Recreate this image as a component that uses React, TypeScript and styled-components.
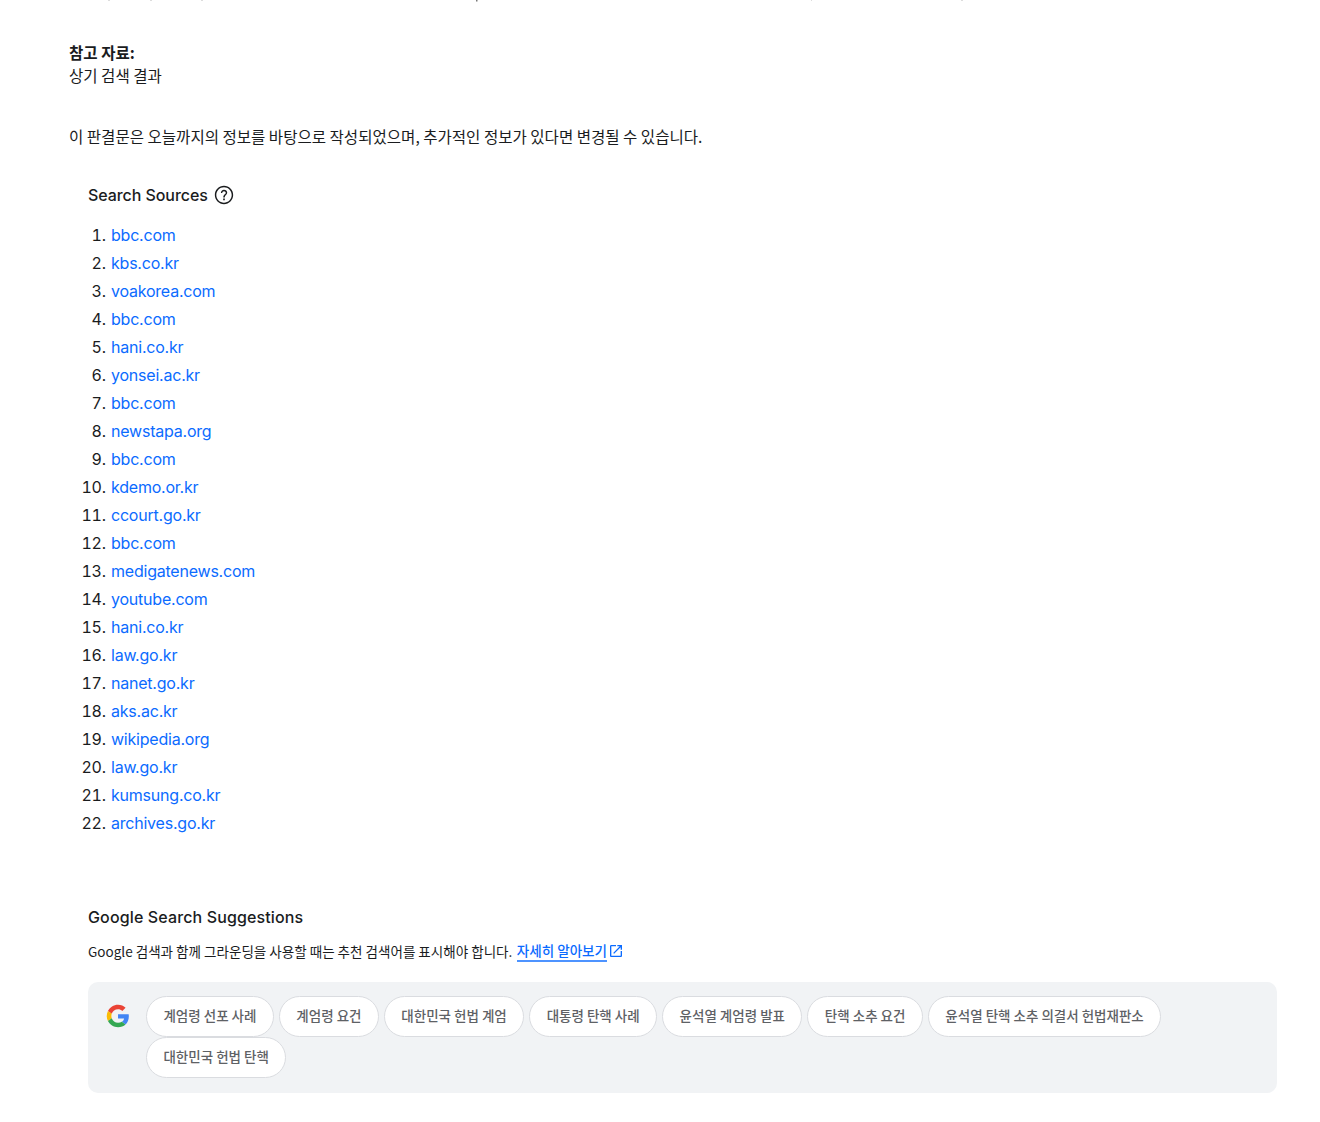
import styled, { createGlobalStyle } from "styled-components";

const GlobalStyle = createGlobalStyle`
  * {
    box-sizing: border-box;
  }

  body {
    margin: 0;
    background: #fff;
    color: #1a1c1e;
    font-family: Inter, "Noto Sans CJK KR", sans-serif;
  }
`;

const Page = styled.main`
  width: 1320px;
  height: 1122px;
  overflow: hidden;
`;

const ClippedLine = styled.svg`
  display: block;
  width: 1320px;
  height: 2px;
`;

const Answer = styled.section`
  padding: 39px 69px 0;
  font-family: "Noto Sans CJK KR", sans-serif;
  font-size: 15.56px;
  line-height: 23px;
`;

const Paragraph = styled.p`
  margin: 0 0 38px;
  white-space: nowrap;

  &:last-child {
    margin-bottom: 35px;
  }
`;

const Label = styled.strong`
  display: block;
  font-weight: 700;
`;

const Sources = styled.section`
  padding: 0 88px;
`;

const Heading = styled.h2<{ $spacing: number }>`
  display: flex;
  align-items: center;
  gap: 5.5px;
  margin: 0;
  height: 24px;
  font-size: 16px;
  font-weight: 500;
  letter-spacing: ${({ $spacing }) => $spacing}px;
  line-height: 24px;
  white-space: nowrap;
`;

const SourceList = styled.ol`
  margin: 14px 0 0;
  padding: 0;
  list-style: none;
`;

const SourceItem = styled.li`
  display: grid;
  grid-template-columns: 25px auto;
  column-gap: 5px;
  margin-left: -7px;
  height: 28px;
  font-size: 16px;
  line-height: 28px;
`;

const SourceNumber = styled.span`
  justify-self: end;
  font-variant-numeric: tabular-nums;
  letter-spacing: -0.15px;
  white-space: nowrap;
`;

const SourceLink = styled.a`
  justify-self: start;
  color: #0b6bff;
  letter-spacing: -0.22px;
  text-decoration: none;
`;

const Suggestions = styled.section`
  padding: 68px 43px 0 88px;
`;

const Description = styled.div`
  display: flex;
  align-items: center;
  margin-top: 12px;
  height: 20px;
  font-family: "Noto Sans CJK KR", sans-serif;
  font-size: 13.54px;
  line-height: 20px;
  white-space: nowrap;
`;

const LearnMore = styled.a`
  display: flex;
  align-items: center;
  margin-left: 4.5px;
  color: #0b6bff;
  font-weight: 500;
  text-decoration: none;

  span {
    height: 22px;
    border-bottom: 2px solid #4d93ff;
  }

  svg {
    margin-left: 1px;
  }
`;

const Panel = styled.div`
  display: flex;
  margin-top: 21px;
  padding: 14px 18px;
  height: 111px;
  border-radius: 10px;
  background: #f1f3f5;
`;

const LogoBox = styled.div`
  flex: none;
  width: 40px;
  padding-top: 8px;
`;

const Chips = styled.div`
  display: flex;
  flex-wrap: wrap;
  align-content: flex-start;
  column-gap: 5px;
`;

const Chip = styled.button`
  height: 41px;
  padding: 0 16.45px 4px;
  border: 1px solid #dadce0;
  border-radius: 21px;
  background: #fff;
  color: #5e6165;
  font-family: "Noto Sans CJK KR", sans-serif;
  font-size: 13.5px;
  font-weight: 500;
  white-space: nowrap;
`;

const sources = [
  "bbc.com",
  "kbs.co.kr",
  "voakorea.com",
  "bbc.com",
  "hani.co.kr",
  "yonsei.ac.kr",
  "bbc.com",
  "newstapa.org",
  "bbc.com",
  "kdemo.or.kr",
  "ccourt.go.kr",
  "bbc.com",
  "medigatenews.com",
  "youtube.com",
  "hani.co.kr",
  "law.go.kr",
  "nanet.go.kr",
  "aks.ac.kr",
  "wikipedia.org",
  "law.go.kr",
  "kumsung.co.kr",
  "archives.go.kr",
];

const suggestions = [
  "계엄령 선포 사례",
  "계엄령 요건",
  "대한민국 헌법 계엄",
  "대통령 탄핵 사례",
  "윤석열 계엄령 발표",
  "탄핵 소추 요건",
  "윤석열 탄핵 소추 의결서 헌법재판소",
  "대한민국 헌법 탄핵",
];

const HelpIcon = () => (
  <svg width="22" height="22" viewBox="0 0 24 24" fill="currentColor">
    <path d="M11.1 17.6h1.8v-1.8h-1.8v1.8zM12 2C6.48 2 2 6.48 2 12s4.48 10 10 10 10-4.48 10-10S17.52 2 12 2zm0 18.4c-4.63 0-8.4-3.77-8.4-8.4S7.37 3.6 12 3.6s8.4 3.77 8.4 8.4-3.77 8.4-8.4 8.4zM12 6.4c-1.9 0-3.4 1.5-3.4 3.4h1.5c0-1.1.8-2 1.9-2s1.9.8 1.9 1.8c0 1.8-2.7 1.9-2.7 5h1.6c0-2.2 2.7-2.7 2.7-5 0-1.8-1.6-3.2-3.5-3.2z" />
  </svg>
);

const OpenIcon = () => (
  <svg width="16" height="16" viewBox="0 0 24 24" fill="currentColor">
    <path d="M19 19H5V5h7V3H5c-1.11 0-2 .9-2 2v14c0 1.1.89 2 2 2h14c1.1 0 2-.9 2-2v-7h-2v7zM14 3v2h3.59l-9.83 9.83 1.41 1.41L19 6.41V10h2V3h-7z" />
  </svg>
);

const GoogleLogo = () => (
  <svg width="24" height="24" viewBox="0 0 48 48">
    <g transform="translate(1.5 1.5) scale(.94)">
      <path
        fill="#EA4335"
        d="M24 9.5c3.54 0 6.71 1.22 9.21 3.6l6.85-6.85C35.9 2.38 30.47 0 24 0 14.62 0 6.51 5.38 2.56 13.22l7.98 6.19C12.43 13.72 17.74 9.5 24 9.5z"
      />
      <path
        fill="#4285F4"
        d="M46.98 24.55c0-1.57-.15-3.09-.38-4.55H24v9.02h12.94c-.58 2.96-2.26 5.48-4.78 7.18l7.73 6c4.51-4.18 7.09-10.36 7.09-17.65z"
      />
      <path
        fill="#FBBC05"
        d="M10.53 28.59c-.48-1.45-.76-2.99-.76-4.59s.27-3.14.76-4.59l-7.98-6.19C.92 16.46 0 20.12 0 24c0 3.88.92 7.54 2.56 10.78l7.97-6.19z"
      />
      <path
        fill="#34A853"
        d="M24 48c6.48 0 11.93-2.13 15.89-5.81l-7.73-6c-2.15 1.45-4.92 2.3-8.16 2.3-6.26 0-11.57-4.22-13.47-9.91l-7.98 6.19C6.51 42.62 14.62 48 24 48z"
      />
    </g>
  </svg>
);

const App: React.FC = () => (
  <Page>
    <GlobalStyle />
    <ClippedLine viewBox="0 0 1320 2">
      <path d="M108 0h2v1h-2zM150 0h2v1h-2zM201 0h2v1h-2zM811 0h1v1h-1zM961 0h2v1h-2z" fill="#ddd" />
      <path d="M476 0h1.5v1.5h-1.5z" fill="#777" />
    </ClippedLine>
    <Answer>
      <Paragraph>
        <Label>참고 자료:</Label>
        상기 검색 결과
      </Paragraph>
      <Paragraph>이 판결문은 오늘까지의 정보를 바탕으로 작성되었으며, 추가적인 정보가 있다면 변경될 수 있습니다.</Paragraph>
    </Answer>
    <Sources>
      <Heading $spacing={-0.07}>
        Search Sources
        <HelpIcon />
      </Heading>
      <SourceList>
        {sources.map((source, index) => (
          <SourceItem key={index}>
            <SourceNumber>{index + 1}.</SourceNumber>
            <SourceLink href="#">{source}</SourceLink>
          </SourceItem>
        ))}
      </SourceList>
    </Sources>
    <Suggestions>
      <Heading $spacing={0.13}>Google Search Suggestions</Heading>
      <Description>
        Google 검색과 함께 그라운딩을 사용할 때는 추천 검색어를 표시해야 합니다.
        <LearnMore href="#">
          <span>자세히 알아보기</span>
          <OpenIcon />
        </LearnMore>
      </Description>
      <Panel>
        <LogoBox>
          <GoogleLogo />
        </LogoBox>
        <Chips>
          {suggestions.map((text) => (
            <Chip key={text}>{text}</Chip>
          ))}
        </Chips>
      </Panel>
    </Suggestions>
  </Page>
);

export default App;
